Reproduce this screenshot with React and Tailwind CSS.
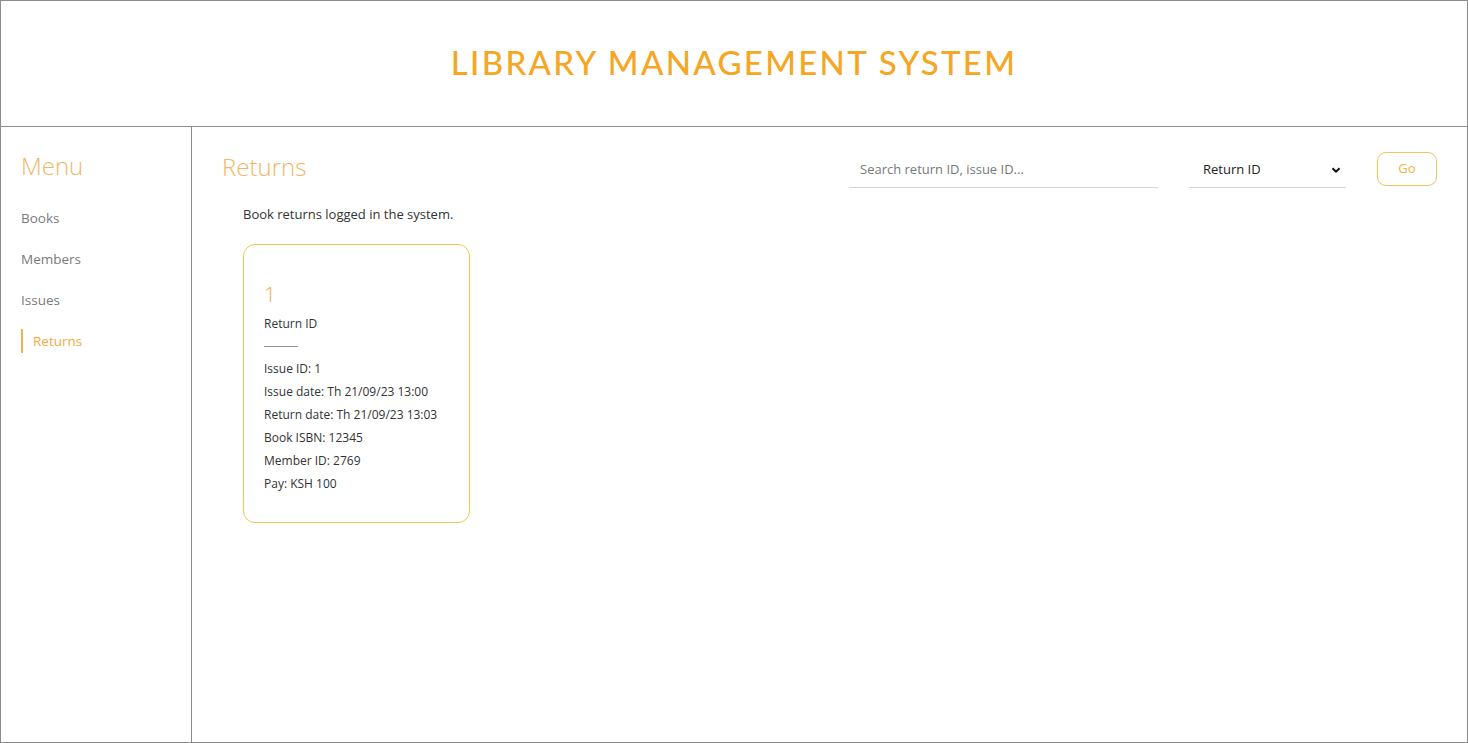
export default function App() {
  const menu = ['Books', 'Members', 'Issues', 'Returns']
  const details = [
    'Issue ID: 1',
    'Issue date: Th 21/09/23 13:00',
    'Return date: Th 21/09/23 13:03',
    'Book ISBN: 12345',
    'Member ID: 2769',
    'Pay: KSH 100',
  ]
  return (
    <div className="h-[743px] w-full border border-[#8c8c8c] flex flex-col bg-white font-['Open_Sans',sans-serif]">
      <header className="h-[126px] shrink-0 border-b border-[#8c8c8c] flex items-center justify-center">
        <h1 className="text-[33px] font-medium tracking-[2.3px] text-[#f5a623] font-['Lato',sans-serif] mt-[-2px]">
          LIBRARY MANAGEMENT SYSTEM
        </h1>
      </header>
      <div className="flex flex-1 min-h-0">
        <aside className="w-[191px] shrink-0 border-r border-[#8c8c8c] pl-[20px] pt-[24px]">
          <h2 className="text-[24px] font-light text-[#f2b563] leading-8 mt-[-1px]">Menu</h2>
          <nav className="mt-[24px] flex flex-col gap-[17px]">
            {menu.map((m) =>
              m === 'Returns' ? (
                <div key={m} className="border-l-2 border-[#f0b544] pl-[10px] h-6 flex items-center text-[13.5px] text-[#f2a93b]">
                  {m}
                </div>
              ) : (
                <div key={m} className="h-6 flex items-center text-[13.5px] text-[#7a7a7a]">
                  {m}
                </div>
              )
            )}
          </nav>
        </aside>
        <main className="flex-1 pl-[30px] pr-[30px] pt-[24px]">
          <div className="flex items-center justify-between h-[38px] mt-[-1px]">
            <h2 className="text-[24px] font-light text-[#f2b563] leading-8 mt-[-4px]">Returns</h2>
            <div className="flex items-center">
              <div className="w-[309px] h-[35px] border-b border-[#d4d4d4] flex items-center pl-[11px] text-[13px] text-[#777] mt-[2px]">
                Search return ID, issue ID...
              </div>
              <div className="ml-[31px] w-[157px] h-[35px] border-b border-[#d4d4d4] flex items-center justify-between pl-[14px] pr-[5px] text-[13px] text-[#222] mt-[2px]">
                <span>Return ID</span>
                <svg width="10" height="10" viewBox="0 0 10 10">
                  <path d="M1.5 3.2 L5 6.7 L8.5 3.2" fill="none" stroke="#111" strokeWidth="2" />
                </svg>
              </div>
              <button className="ml-[31px] w-[60px] h-[34px] rounded-[9px] border border-[#f2c35c] text-[13px] text-[#f2b045]">
                Go
              </button>
            </div>
          </div>
          <p className="mt-[17px] ml-[21px] text-[13px] text-[#333]">Book returns logged in the system.</p>
          <div className="mt-[19px] ml-[21px] w-[227px] h-[279px] rounded-[12px] border border-[#f3c454] pl-[20px] pt-[37px]">
            <div className="text-[21px] font-light text-[#f0a840] leading-6">1</div>
            <div className="mt-[9px] text-[12px] text-[#333]">Return ID</div>
            <div className="mt-[13px] w-[34px] border-t border-[#999]"></div>
            <div className="mt-[13px] flex flex-col gap-[6px]">
              {details.map((d) => (
                <div key={d} className="text-[12px] text-[#333] leading-[17px]">
                  {d}
                </div>
              ))}
            </div>
          </div>
        </main>
      </div>
    </div>
  )
}
